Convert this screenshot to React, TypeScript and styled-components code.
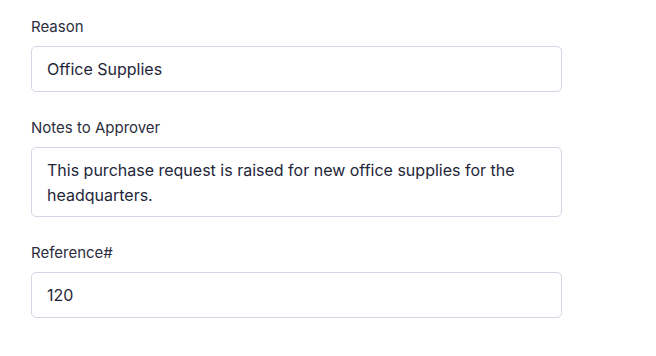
import React from "react"
import styled, { createGlobalStyle } from "styled-components"

const GlobalStyle = createGlobalStyle`
  html, body {
    margin: 0;
    padding: 0;
    background: #ffffff;
  }
  body {
    font-family: Inter, "Noto Sans", sans-serif;
    -webkit-font-smoothing: antialiased;
  }
`

const FormSt = styled.form`
  display: flex;
  flex-direction: column;
  gap: 26px;
  width: 531px;
  padding: 17px 0 0 31px;
`

const FieldSt = styled.div`
  display: flex;
  flex-direction: column;
  gap: 9px;
`

const LabelSt = styled.label`
  font-size: 15px;
  line-height: 20px;
  color: #2c2e40;
`

const InputSt = styled.input`
  box-sizing: border-box;
  width: 100%;
  height: 46px;
  padding: 0 15px;
  border: 1px solid #d5d5e3;
  border-radius: 5px;
  font-family: inherit;
  font-size: 16px;
  color: #24263a;
  background: #fff;
  outline: none;
`

const TextAreaSt = styled.textarea`
  box-sizing: border-box;
  width: 100%;
  height: 70px;
  padding: 10px 15px;
  border: 1px solid #d5d5e3;
  border-radius: 5px;
  font-family: inherit;
  font-size: 16px;
  line-height: 25px;
  color: #24263a;
  background: #fff;
  resize: none;
  outline: none;
  overflow: hidden;
`

export default function App() {
  return <>
    <GlobalStyle />
    <FormSt>
      <FieldSt>
        <LabelSt htmlFor="reason">Reason</LabelSt>
        <InputSt id="reason" defaultValue="Office Supplies" />
      </FieldSt>
      <FieldSt>
        <LabelSt htmlFor="notes">Notes to Approver</LabelSt>
        <TextAreaSt
          id="notes"
          defaultValue="This purchase request is raised for new office supplies for the headquarters."
        />
      </FieldSt>
      <FieldSt>
        <LabelSt htmlFor="ref">Reference#</LabelSt>
        <InputSt id="ref" defaultValue="120" />
      </FieldSt>
    </FormSt>
  </>
}
